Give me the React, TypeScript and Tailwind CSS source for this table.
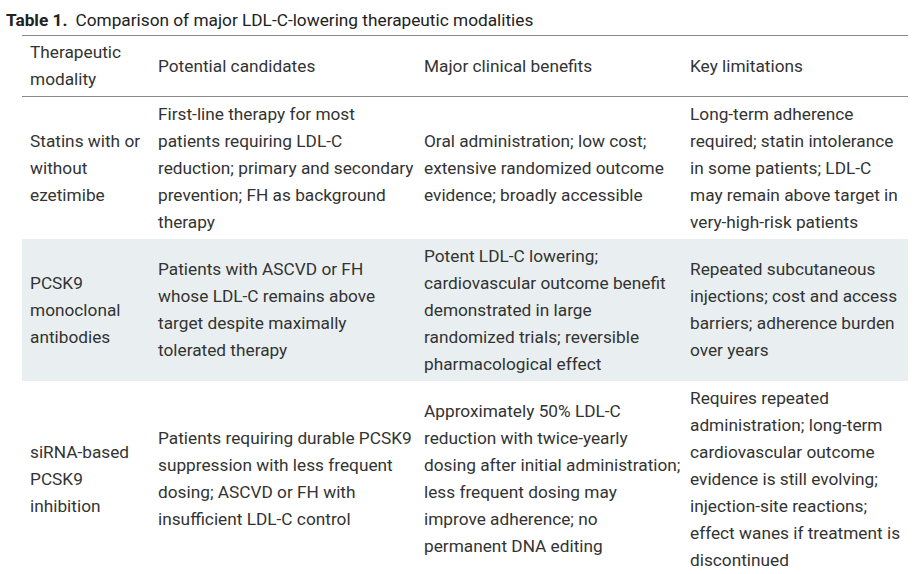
const rows = [
  {
    modality: "Statins with or without ezetimibe",
    candidates:
      "First-line therapy for most patients requiring LDL-C reduction; primary and secondary prevention; FH as background therapy",
    benefits:
      "Oral administration; low cost; extensive randomized outcome evidence; broadly accessible",
    limitations:
      "Long-term adherence required; statin intolerance in some patients; LDL-C may remain above target in very-high-risk patients",
    shaded: false,
  },
  {
    modality: "PCSK9 monoclonal antibodies",
    candidates:
      "Patients with ASCVD or FH whose LDL-C remains above target despite maximally tolerated therapy",
    benefits:
      "Potent LDL-C lowering; cardiovascular outcome benefit demonstrated in large randomized trials; reversible pharmacological effect",
    limitations:
      "Repeated subcutaneous injections; cost and access barriers; adherence burden over years",
    shaded: true,
  },
  {
    modality: "siRNA-based PCSK9 inhibition",
    candidates:
      "Patients requiring durable PCSK9 suppression with less frequent dosing; ASCVD or FH with insufficient LDL-C control",
    benefits:
      "Approximately 50% LDL-C reduction with twice-yearly dosing after initial administration; less frequent dosing may improve adherence; no permanent DNA editing",
    limitations:
      "Requires repeated administration; long-term cardiovascular outcome evidence is still evolving; injection-site reactions; effect wanes if treatment is discontinued",
    shaded: false,
  },
];

export default function App() {
  return (
    <div className="min-h-screen bg-white font-['Roboto',sans-serif] text-[#333]">
      <p className="pl-[6px] pt-[9px] text-[17.25px] leading-[22px] text-[#222]">
        <span className="font-bold">Table 1.</span>
        <span className="ml-[8px]">Comparison of major LDL-C-lowering therapeutic modalities</span>
      </p>

      <table className="mt-[4px] ml-[22px] w-[886px] table-fixed border-collapse text-[17.25px] leading-[27px]">
        <colgroup>
          <col className="w-[128px]" />
          <col className="w-[266px]" />
          <col className="w-[266px]" />
          <col className="w-[226px]" />
        </colgroup>
        <thead>
          <tr className="border-t border-b border-[#8a8a8a] text-left align-middle">
            <th className="pl-2 pr-0 py-[3px] font-normal">Therapeutic modality</th>
            <th className="pl-2 pr-0 py-[3px] font-normal">Potential candidates</th>
            <th className="pl-2 pr-0 py-[3px] font-normal">Major clinical benefits</th>
            <th className="pl-2 pr-1 py-[3px] font-normal">Key limitations</th>
          </tr>
        </thead>
        <tbody>
          {rows.map((r) => (
            <tr
              key={r.modality}
              className={`align-middle ${r.shaded ? "bg-[#e9eff0]" : ""}`}
            >
              <td className="pl-2 pr-0 py-[3.5px]">{r.modality}</td>
              <td className="pl-2 pr-0 py-[3.5px]">{r.candidates}</td>
              <td className="pl-2 pr-0 py-[3.5px]">{r.benefits}</td>
              <td className="pl-2 pr-1 py-[3.5px]">{r.limitations}</td>
            </tr>
          ))}
        </tbody>
      </table>
    </div>
  );
}
